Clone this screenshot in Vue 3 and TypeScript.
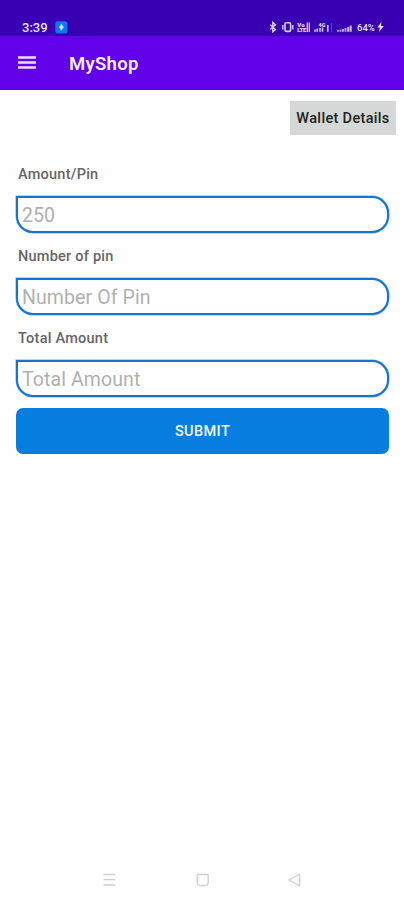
<script setup lang="ts">
import { ref } from 'vue'

interface Field {
  id: string
  label: string
  placeholder: string
}

const fields: Field[] = [
  { id: 'amount', label: 'Amount/Pin', placeholder: '250' },
  { id: 'count', label: 'Number of pin', placeholder: 'Number Of Pin' },
  { id: 'total', label: 'Total Amount', placeholder: 'Total Amount' },
]
const values = ref<Record<string, string>>({ amount: '', count: '', total: '' })
</script>

<template>
  <div class="screen">
    <div class="status">
      <span class="time">3:39</span>
      <svg class="app-badge" width="13" height="13" viewBox="0 0 13 13">
        <rect x="0.3" y="0.3" width="12.2" height="12.2" rx="2.5" fill="#1672f0" />
        <path d="M6.4 2.5 9 6.1 6.4 10 3.8 6.1Z" fill="#7fcfff" />
        <path d="M6.4 4.3v4M5 6.2h2.8" stroke="#fff" stroke-width="1" />
      </svg>
      <svg class="indicators" width="86" height="12" viewBox="0 0 86 12" fill="none" stroke="#d9cffa">
        <path d="M1.2 3.7 6.4 8.5 3.8 10.9V1.3L6.4 3.7 1.2 8.5" stroke-width="1.4" />
        <rect x="16" y="1.8" width="5.6" height="8.6" rx="1.4" stroke-width="1.6" />
        <path d="M13.8 4v4.6M23.8 4v4.6" stroke-width="1.4" />
        <g fill="#e2daff" stroke="none" font-family="Roboto, sans-serif" font-weight="900">
          <text x="28.3" y="5.6" font-size="6">Vo</text>
          <text x="28.3" y="10.9" font-size="6" textLength="9">LTE</text>
          <text x="49.5" y="6.2" font-size="5.5">4G</text>
        </g>
        <path d="M38.3 1.4v9.6M40.3 1.4v9.6" stroke-width="1.3" />
        <path d="M46 10.8V8.6M48.2 10.8V7.6M51 10.8V7.1M53.5 10.8V6.6M58.8 10.8V4" stroke-width="1.5" />
        <path d="M62.5 2v9" stroke="#7159cb" stroke-width="0.7" />
        <path d="M69 10.8V9M71.5 10.8V8.6M74 10.8V8.1M76.5 10.8V7.1" stroke="#b8a7eb" stroke-width="1.9" />
        <path d="M79.2 10.8V6.1M81.7 10.8V4.6" stroke="#c9bdf1" stroke-width="2" />
      </svg>
      <span class="battery">64%</span>
      <svg class="bolt" width="7" height="10" viewBox="0 0 7 10">
        <path d="M4.5 0 0.2 5.5H2.8L2 10 6.8 4H4Z" fill="#e8e2ff" />
      </svg>
    </div>

    <header class="app-bar">
      <svg width="18" height="14" viewBox="0 0 18 14" stroke="#eadfff" stroke-width="2.5">
        <path d="M0 1.4h18M0 6.5h18M0 11.6h18" />
      </svg>
      <h1>MyShop</h1>
    </header>

    <main>
      <button class="wallet" type="button">Wallet Details</button>
      <form @submit.prevent>
        <template v-for="field in fields" :key="field.id">
          <label :for="field.id">{{ field.label }}</label>
          <input :id="field.id" v-model="values[field.id]" type="text" :placeholder="field.placeholder" />
        </template>
        <button class="submit" type="submit">SUBMIT</button>
      </form>
    </main>

    <nav>
      <svg width="14" height="14" viewBox="0 0 14 14" stroke="#cfcfcf" stroke-width="1.3">
        <path d="M0.6 1.5h11.5M0.6 6.7h11.5M0.6 12h11.5" />
      </svg>
      <svg width="14" height="14" viewBox="0 0 14 14" fill="none" stroke="#cfcfcf" stroke-width="1.3">
        <path d="M1.8 1.5H11.6Q12.2 1.5 12.2 2.1V9.3Q12.2 12.5 9 12.5H4.4Q1.2 12.5 1.2 9.3V2.1Q1.2 1.5 1.8 1.5Z" />
      </svg>
      <svg width="14" height="14" viewBox="0 0 14 14" fill="none" stroke="#cfcfcf" stroke-width="1.3" stroke-linejoin="round">
        <path d="M1 7 11.5 1.2Q12 7 11.5 12.8Z" />
      </svg>
    </nav>
  </div>
</template>

<style>
body {
  background: #fefefe;
}
</style>

<style scoped>
.screen {
  display: flex;
  flex-direction: column;
  width: 404px;
  height: 900px;
  overflow: hidden;
  background: #fefefe;
  font-family: Roboto, sans-serif;
}
.status {
  display: flex;
  align-items: center;
  box-sizing: border-box;
  height: 36px;
  padding: 18px 20px 0 22px;
  background: #3800b2;
  color: #eae4ff;
}
.time {
  width: 33px;
  font-size: 13px;
  font-weight: 500;
}
.indicators {
  margin-left: auto;
}
.battery {
  width: 19px;
  margin-left: 2px;
  font-size: 9.5px;
  font-weight: 500;
  white-space: nowrap;
}
.bolt {
  margin-left: 1px;
}
.app-bar {
  display: flex;
  align-items: center;
  box-sizing: border-box;
  height: 54px;
  padding: 0 18px;
  gap: 33px;
  background: #6200ea;
}
.app-bar h1 {
  margin: 2px 0 0;
  color: #f6f0ff;
  font-size: 18.5px;
  font-weight: 600;
  letter-spacing: 0.3px;
}
main {
  display: flex;
  flex: 1;
  flex-direction: column;
  padding: 11px 8px 0;
}
button {
  border: 0;
  font-family: inherit;
  font-weight: 500;
}
.wallet {
  align-self: flex-end;
  width: 106px;
  height: 34px;
  padding: 1px 0 0;
  background: #d5d8d7;
  color: #222;
  font-size: 14.5px;
  letter-spacing: 0.33px;
  white-space: nowrap;
}
form {
  display: flex;
  flex-direction: column;
  padding: 16px 7px 0 8px;
}
label {
  height: 45px;
  padding-left: 2px;
  color: #666;
  font-size: 14.5px;
  font-weight: 500;
  letter-spacing: 0.24px;
  line-height: 48px;
}
input {
  box-sizing: border-box;
  width: 100%;
  height: 37px;
  padding: 2px 3px 0 4px;
  border: 2px solid #1474cf;
  border-radius: 0 17px 17px 17px;
  outline: 0;
  background: #fff;
  box-shadow: 0 0 0 0.5px #6eafe8;
  color: #333;
  font-family: inherit;
  font-size: 19.5px;
  letter-spacing: 0.1px;
}
input::placeholder {
  color: #b0b0b0;
  opacity: 1;
}
.submit {
  height: 46px;
  margin-top: 11px;
  border-radius: 7px;
  background: #057edf;
  color: #f5faff;
  font-size: 14.5px;
  letter-spacing: 0.4px;
}
nav {
  display: flex;
  justify-content: space-between;
  padding: 0 102px 13px 103px;
}
</style>
